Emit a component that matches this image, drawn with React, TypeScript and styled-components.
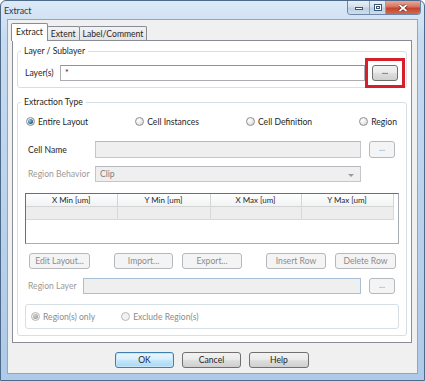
import React from 'react';
import styled, {createGlobalStyle, css} from 'styled-components';

const GlobalStyle = createGlobalStyle`
  html, body {margin: 0; padding: 0; background: #ffffff;}
  body {font-family: Lato, "Open Sans", sans-serif; font-size: 8.6px; color: #262626;}
  * {box-sizing: border-box;}
`;

const Window = styled.div`
  width: 425px; height: 381px;
  display: flex; flex-direction: column;
  border: 1px solid #4d6a8a;
  border-radius: 6px 6px 0 0;
  background: linear-gradient(180deg, #dce9f7 0%, #c6dbf1 10%, #b9d1eb 60%, #aecae8 100%);
`;

const TitleBar = styled.div`
  height: 18px; display: flex; justify-content: space-between; align-items: flex-start;
  padding: 0 3px;
`;

const Title = styled.span`font-size: 8.8px; line-height: 19px; color: #24344a;`;

const Caption = styled.div`
  display: flex; height: 14px;
  border: 1px solid #6f87a5; border-top: none;
  border-radius: 0 0 4px 4px; overflow: hidden;
`;

const CapButton = styled.div<{$w: number; $close?: boolean}>`
  width: ${p => p.$w}px; height: 100%;
  display: flex; align-items: center; justify-content: center;
  border-left: 1px solid #8aa0bb;
  &:first-child {border-left: none;}
  background: ${p => p.$close
    ? 'linear-gradient(180deg, #e9a99a 0%, #d6735f 45%, #c2452d 55%, #d7664c 100%)'
    : 'linear-gradient(180deg, #e8eff7 0%, #d3e0ee 45%, #bfd0e4 55%, #cdddef 100%)'};
`;

const Client = styled.div`
  flex: 1; margin: 0 6px 6px;
  display: flex; flex-direction: column;
  border: 1px solid #8ea7c4;
  background: #f0f0f0;
  padding: 3px 5px 0 4px;
`;

const TabStrip = styled.div`display: flex; align-items: flex-end; height: 17px; margin-left: -1px;`;

const Tab = styled.div<{$active?: boolean}>`
  display: flex; align-items: center; justify-content: center;
  border: 1px solid #898c95; border-bottom: none;
  border-radius: 2px 2px 0 0;
  margin-left: -1px;
  &:first-child {margin-left: 0;}
  ${p => p.$active ? css`
    height: 18px; padding: 0 4px 1px; margin-bottom: -1px; background: #ffffff;
    position: relative; z-index: 1;
  ` : css`
    height: 14px; padding: 0 3px; background: linear-gradient(180deg, #f3f3f3, #e4e4e4);
  `}
`;

const Panel = styled.div`
  border: 1px solid #898c95; background: #ffffff;
  padding: 5px 4px 6px;
  display: flex; flex-direction: column; gap: 9px;
`;

const Group = styled.fieldset<{$pad: string}>`
  margin: 0; min-width: 0;
  border: 1px solid #d5dfe5; border-radius: 3px;
  padding: ${p => p.$pad};
  display: flex; flex-direction: column;
`;

const Legend = styled.legend`
  padding: 0 3px; margin-left: -4px; line-height: 11px;
`;

const Row = styled.div<{$cols: string; $h: number; $top?: number}>`
  display: grid; grid-template-columns: ${p => p.$cols};
  column-gap: 8px; align-items: center;
  height: ${p => p.$h}px; margin-top: ${p => p.$top ?? 0}px;
  padding: 0 4px 0 3px;
`;

const Label = styled.span<{$disabled?: boolean}>`
  color: ${p => p.$disabled ? '#9a9a9a' : 'inherit'}; white-space: nowrap;
`;

const TextBox = styled.div<{$disabled?: boolean}>`
  height: 100%; display: flex; align-items: center; padding-left: 4px;
  border: 1px solid ${p => p.$disabled ? '#c3c7cb' : '#abadb3'};
  border-top-color: ${p => p.$disabled ? '#b5b9bd' : '#8f939b'};
  background: ${p => p.$disabled ? '#efefef' : '#ffffff'};
  color: ${p => p.$disabled ? '#808080' : 'inherit'};
  position: relative;
`;

const ComboArrow = styled.span`
  position: absolute; right: 6px; top: 7px;
  border-left: 3px solid transparent; border-right: 3px solid transparent;
  border-top: 3px solid #9a9a9a;
`;

const buttonBase = css`
  display: flex; align-items: center; justify-content: center;
  border-radius: 3px; white-space: nowrap;
`;

const PushButton = styled.div<{$w: number; $disabled?: boolean; $default?: boolean}>`
  ${buttonBase};
  width: ${p => p.$w}px; height: 16px;
  ${p => p.$disabled ? css`
    border: 1px solid #b5b9bd; background: #f4f4f4; color: #8c8c8c;
  ` : p.$default ? css`
    border: 1px solid #3c7fb1;
    background: linear-gradient(180deg, #eaf6fd 0%, #d9f0fc 45%, #bee6fd 55%, #a7d9f5 100%);
    box-shadow: inset 0 0 0 1px #c9e7f8;
  ` : css`
    border: 1px solid #707070;
    background: linear-gradient(180deg, #f2f2f2 0%, #ebebeb 45%, #dddddd 55%, #cfcfcf 100%);
  `}
`;

const DotsButton = styled.div<{$disabled?: boolean; $h: number}>`
  ${buttonBase};
  width: 26px; height: ${p => p.$h}px; padding-bottom: 3px;
  ${p => p.$disabled ? css`
    border: 1px solid #b5b9bd; background: #f4f4f4; color: #9a9a9a;
  ` : css`
    border: 1px solid #707070;
    background: linear-gradient(180deg, #f2f2f2 0%, #ebebeb 45%, #dddddd 55%, #cfcfcf 100%);
  `}
`;

const Highlight = styled.div`
  outline: 3px solid #d3202b; outline-offset: 4px;
`;

const RadioRow = styled.div<{$spread?: boolean}>`
  display: flex; align-items: center; height: 13px;
  justify-content: ${p => p.$spread ? 'space-between' : 'flex-start'};
  gap: ${p => p.$spread ? 0 : 26}px;
  padding: 0 ${p => p.$spread ? 2 : 4}px 0 1px;
`;

const RadioOption = styled.label<{$disabled?: boolean}>`
  display: flex; align-items: center; gap: 3px;
  color: ${p => p.$disabled ? '#8c8c8c' : 'inherit'};
`;

const RadioDot = styled.span<{$checked?: boolean; $disabled?: boolean}>`
  width: 9px; height: 9px; border-radius: 50%;
  display: flex; align-items: center; justify-content: center;
  border: 1px solid ${p => p.$disabled ? '#b8b8b8' : '#8e8f8f'};
  background: ${p => p.$disabled ? '#f2f2f2' : 'radial-gradient(circle at 35% 35%, #ffffff, #d4d4d4)'};
  &::after {
    content: ''; display: ${p => p.$checked ? 'block' : 'none'};
    width: 5px; height: 5px; border-radius: 50%;
    background: ${p => p.$disabled
      ? 'radial-gradient(circle at 35% 35%, #d0d0d0, #8f8f8f)'
      : 'radial-gradient(circle at 35% 35%, #8fd0f2, #1b5d8e 70%)'};
  }
`;

const GridBox = styled.div`
  height: 51px; margin-top: 11px;
  border: 1px solid #a8adb3; border-top-color: #6e6e6e; border-left-color: #6e6e6e;
  background: #ffffff; overflow: hidden;
`;

const Table = styled.table`
  border-collapse: collapse; table-layout: fixed; width: 367px;
`;

const Th = styled.th`
  height: 12px; padding: 0; font-weight: normal; font-size: 8px; text-align: center;
  border-right: 1px solid #d5d5d5; border-bottom: 1px solid #d5d5d5;
  background: linear-gradient(180deg, #ffffff, #f1f2f4);
`;

const Td = styled.td`
  height: 13px; padding: 0; background: #ededed;
  border-right: 1px solid #d9d9d9; border-bottom: 1px solid #d9d9d9;
`;

const ButtonBar = styled.div`
  display: flex; justify-content: space-between; align-items: center;
  margin-top: 9px; padding: 0 3px 0 4px;
`;

const ButtonPair = styled.div`display: flex; gap: 9px;`;

const InnerGroup = styled.div`
  margin-top: 10px; height: 25px;
  border: 1px solid #d5dfe5; border-radius: 3px;
  display: flex; align-items: center; padding-left: 4px;
`;

const Footer = styled.div`
  display: flex; justify-content: center; gap: 8px; padding-top: 9px;
`;

function Radio({label, checked, disabled}: {label: string; checked?: boolean; disabled?: boolean}) {
    return (
        <RadioOption $disabled={disabled}>
            <RadioDot $checked={checked} $disabled={disabled}/>
            {label}
        </RadioOption>
    );
}

const columns = ['X Min [um]', 'Y Min [um]', 'X Max [um]', 'Y Max [um]'];
const colWidths = [91, 93, 91, 92];

export default function App() {
    return (
        <>
            <GlobalStyle/>
            <Window>
                <TitleBar>
                    <Title>Extract</Title>
                    <Caption>
                        <CapButton $w={21}>
                            <svg width="8" height="4" viewBox="0 0 8 4">
                                <rect x="0.5" y="1.5" width="7" height="2" fill="#fff" stroke="#3d5675"/>
                            </svg>
                        </CapButton>
                        <CapButton $w={16}>
                            <svg width="8" height="7" viewBox="0 0 8 7">
                                <rect x="0.5" y="0.5" width="7" height="6" fill="#fff" stroke="#3d5675"/>
                                <rect x="2.5" y="2.5" width="3" height="2" fill="none" stroke="#3d5675"/>
                            </svg>
                        </CapButton>
                        <CapButton $w={35} $close>
                            <svg width="10" height="8" viewBox="0 0 10 8">
                                <path d="M1.5 1 L8.5 7 M8.5 1 L1.5 7" stroke="#5b1a10" strokeWidth="3"/>
                                <path d="M1.5 1 L8.5 7 M8.5 1 L1.5 7" stroke="#ffffff" strokeWidth="1.8"/>
                            </svg>
                        </CapButton>
                    </Caption>
                </TitleBar>
                <Client>
                    <TabStrip>
                        <Tab $active>Extract</Tab>
                        <Tab>Extent</Tab>
                        <Tab>Label/Comment</Tab>
                    </TabStrip>
                    <Panel>
                        <Group $pad="7px 8px 6px 7px">
                            <Legend>Layer / Sublayer</Legend>
                            <Row $cols="28px 1fr 26px" $h={17} style={{padding: 0, columnGap: 7}}>
                                <Label>Layer(s)</Label>
                                <TextBox style={{height: 16}}>*</TextBox>
                                <Highlight>
                                    <DotsButton $h={16}>...</DotsButton>
                                </Highlight>
                            </Row>
                        </Group>
                        <Group $pad="7px 7px 6px 7px">
                            <Legend>Extraction Type</Legend>
                            <RadioRow $spread>
                                <Radio label="Entire Layout" checked/>
                                <Radio label="Cell Instances"/>
                                <Radio label="Cell Definition"/>
                                <Radio label="Region"/>
                            </RadioRow>
                            <Row $cols="59px 1fr 26px" $h={17} $top={13}>
                                <Label>Cell Name</Label>
                                <TextBox $disabled/>
                                <DotsButton $disabled $h={17}>...</DotsButton>
                            </Row>
                            <Row $cols="59px 1fr 26px" $h={16} $top={8}>
                                <Label $disabled>Region Behavior</Label>
                                <TextBox $disabled>Clip<ComboArrow/></TextBox>
                            </Row>
                            <GridBox>
                                <Table>
                                    <colgroup>
                                        {colWidths.map((w, i) => <col key={i} style={{width: w}}/>)}
                                    </colgroup>
                                    <thead>
                                        <tr>{columns.map(c => <Th key={c}>{c}</Th>)}</tr>
                                    </thead>
                                    <tbody>
                                        <tr>{columns.map(c => <Td key={c}/>)}</tr>
                                    </tbody>
                                </Table>
                            </GridBox>
                            <ButtonBar>
                                <PushButton $w={61} $disabled>Edit Layout...</PushButton>
                                <ButtonPair>
                                    <PushButton $w={59} $disabled>Import...</PushButton>
                                    <PushButton $w={60} $disabled>Export...</PushButton>
                                </ButtonPair>
                                <ButtonPair>
                                    <PushButton $w={60} $disabled>Insert Row</PushButton>
                                    <PushButton $w={61} $disabled>Delete Row</PushButton>
                                </ButtonPair>
                            </ButtonBar>
                            <Row $cols="47px 1fr 26px" $h={16} $top={9}>
                                <Label $disabled>Region Layer</Label>
                                <TextBox $disabled style={{borderColor: '#a9bfd6'}}/>
                                <DotsButton $disabled $h={16}>...</DotsButton>
                            </Row>
                            <InnerGroup>
                                <RadioRow>
                                    <Radio label="Region(s) only" checked disabled/>
                                    <Radio label="Exclude Region(s)" disabled/>
                                </RadioRow>
                            </InnerGroup>
                        </Group>
                    </Panel>
                    <Footer>
                        <PushButton $w={59} $default>OK</PushButton>
                        <PushButton $w={59}>Cancel</PushButton>
                        <PushButton $w={60}>Help</PushButton>
                    </Footer>
                </Client>
            </Window>
        </>
    );
}
